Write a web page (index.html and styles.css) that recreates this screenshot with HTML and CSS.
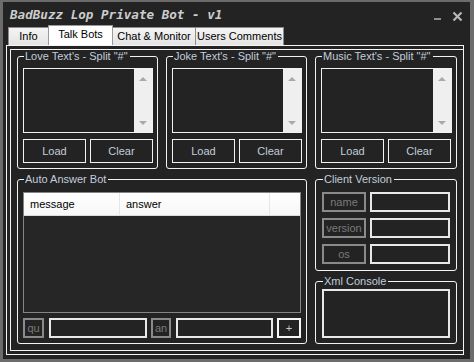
FILE: index.html
```html
<!DOCTYPE html>
<html>
<head>
<meta charset="utf-8">
<link rel="stylesheet" href="styles.css">
</head>
<body>
<div class="window">
  <div class="titlebar">
    <span class="title">BadBuzz Lop Private Bot - v1</span>
    <svg class="winctl" width="29" height="23" viewBox="0 0 29 23">
      <line x1="0" y1="17" x2="7" y2="17" stroke="#8e8e8e" stroke-width="2"/>
      <line x1="19.5" y1="10.5" x2="27.5" y2="18.5" stroke="#b9b9b9" stroke-width="2.2"/>
      <line x1="27.5" y1="10.5" x2="19.5" y2="18.5" stroke="#b9b9b9" stroke-width="2.2"/>
    </svg>
  </div>
  <div class="tabs">
    <div class="tab t-info">Info</div>
    <div class="tab active t-talk">Talk Bots</div>
    <div class="tab t-chat">Chat &amp; Monitor</div>
    <div class="tab t-users">Users Comments</div>
  </div>
  <div class="panel">
    <div class="page">
      <fieldset class="group top">
        <legend>Love Text's - Split "#"</legend>
        <div class="memo"><div class="scroll"><span class="arr up"></span><span class="arr down"></span></div></div>
        <div class="btns"><button class="btn">Load</button><button class="btn">Clear</button></div>
      </fieldset>
      <fieldset class="group top">
        <legend>Joke Text's - Split "#"</legend>
        <div class="memo"><div class="scroll"><span class="arr up"></span><span class="arr down"></span></div></div>
        <div class="btns"><button class="btn">Load</button><button class="btn">Clear</button></div>
      </fieldset>
      <fieldset class="group top">
        <legend>Music Text's - Split "#"</legend>
        <div class="memo"><div class="scroll"><span class="arr up"></span><span class="arr down"></span></div></div>
        <div class="btns"><button class="btn">Load</button><button class="btn">Clear</button></div>
      </fieldset>

      <fieldset class="group auto">
        <legend>Auto Answer Bot</legend>
        <div class="list">
          <div class="lhead">
            <div class="col c1">message</div>
            <div class="col c2">answer</div>
            <div class="col c3"></div>
          </div>
        </div>
        <div class="qrow">
          <div class="lbl l-qu">qu</div>
          <div class="inp i-q"></div>
          <div class="lbl l-an">an</div>
          <div class="inp i-a"></div>
          <button class="plus">+</button>
        </div>
      </fieldset>

      <div class="rightcol">
        <fieldset class="group client">
          <legend>Client Version</legend>
          <div class="crow"><div class="lbl cl">name</div><div class="inp ci"></div></div>
          <div class="crow"><div class="lbl cl">version</div><div class="inp ci"></div></div>
          <div class="crow"><div class="lbl cl">os</div><div class="inp ci"></div></div>
        </fieldset>
        <fieldset class="group xml">
          <legend>Xml Console</legend>
          <div class="console"></div>
        </fieldset>
      </div>
    </div>
  </div>
</div>
</body>
</html>
```

FILE: styles.css
```css
* { box-sizing: border-box; }
html, body { margin: 0; }
body {
  width: 474px;
  height: 362px;
  overflow: hidden;
  background: #6c6c6c;
  padding: 2px 4px 3px 3px;
  font-family: "Liberation Sans", Arial, sans-serif;
  font-size: 11px;
}
.window {
  height: 357px;
  background: #232323;
}
.titlebar {
  height: 23px;
  display: flex;
  align-items: center;
  justify-content: space-between;
  padding: 0 7px 0 7px;
}
.title {
  font-family: "DejaVu Sans Mono", monospace;
  font-weight: bold;
  font-style: italic;
  font-size: 12.6px;
  color: #cdcdcd;
  line-height: 15px;
  margin-top: 1px;
}
.winctl { display: block; }

.tabs {
  height: 20px;
  display: flex;
  align-items: flex-end;
  padding-left: 5px;
}
.tab {
  height: 18px;
  border: 1px solid #8d8d8d;
  border-bottom: none;
  background: linear-gradient(#f4f4f4, #e4e4e4);
  color: #000;
  font-size: 11px;
  line-height: 17px;
  text-align: center;
  white-space: nowrap;
}
.tab.active {
  height: 20px;
  background: #fff;
  line-height: 16px;
  border-color: #9a9a9a;
}
.t-info { width: 40px; border-right: none; }
.t-talk { width: 65px; }
.t-chat { width: 83px; border-left: none; }
.t-users { width: 88px; border-left: none; }

.panel {
  height: 310px;
  margin: 0 6px 0 3px;
  border: 1px solid #f4f4f4;
}
.page {
  height: 302px;
  margin: 3px 0 3px 3px;
  border: 1px solid #f4f4f4;
  border-right: none;
  padding: 0 0 0 6px;
  display: grid;
  grid-template-columns: 141px 141px 142px;
  grid-template-rows: 119px 171px;
  column-gap: 8px;
  row-gap: 4px;
}

.group {
  margin: 0;
  min-width: 0;
  border: 1px solid #f2f2f2;
  border-radius: 3px;
  padding: 5px 4px 5px 5px;
  height: 100%;
}
.group legend {
  padding: 0 2px 0 1px;
  margin-left: 1px;
  color: #c2cddb;
  font-size: 11px;
  line-height: 13px;
  white-space: nowrap;
}

.memo {
  height: 65px;
  border: 1px solid #f2f2f2;
  background: #232323;
  display: flex;
  justify-content: flex-end;
}
.scroll {
  width: 18px;
  height: 100%;
  background: #efefef;
  display: flex;
  flex-direction: column;
  justify-content: space-between;
  align-items: center;
  padding: 8px 0 7px;
}
.arr {
  width: 0;
  height: 0;
  border-left: 4px solid transparent;
  border-right: 4px solid transparent;
}
.arr.up { border-bottom: 4px solid #a9a9a9; }
.arr.down { border-top: 4px solid #a9a9a9; }

.btns {
  margin-top: 6px;
  display: flex;
  gap: 4px;
}
.btn {
  width: 63px;
  height: 24px;
  margin: 0;
  padding: 0;
  border: 1px solid #f2f2f2;
  background: #232323;
  color: #c2cddb;
  font-family: "Liberation Sans", Arial, sans-serif;
  font-size: 11px;
}

.auto {
  grid-column: 1 / 3;
  padding: 6px 5px 5px 5px;
}
.list {
  height: 121px;
  border: 1px solid #858585;
  background: #262626;
}
.lhead {
  height: 23px;
  display: flex;
  background: linear-gradient(#ffffff, #f7f7f7);
  border-bottom: 1px solid #dcdcdc;
}
.col {
  color: #000;
  font-size: 11px;
  line-height: 22px;
  padding-left: 6px;
  border-right: 1px solid #e6e6e6;
}
.c1 { width: 96px; }
.c2 { width: 150px; }
.c3 { flex: 1; border-right: none; }

.qrow {
  margin-top: 5px;
  height: 20px;
  display: flex;
}
.lbl {
  height: 20px;
  border: 2px solid #8a8a8a;
  color: #7a7a7a;
  font-size: 11px;
  line-height: 16px;
  text-align: center;
}
.inp {
  height: 20px;
  border: 2px solid #e8e8e8;
}
.l-qu { width: 21px; }
.i-q { width: 98px; margin-left: 5px; }
.l-an { width: 20px; margin-left: 4px; }
.i-a { width: 97px; margin-left: 5px; }
.plus {
  width: 24px;
  height: 20px;
  margin: 0 0 0 4px;
  padding: 0;
  border: 2px solid #f6f6f6;
  background: #232323;
  color: #c2cddb;
  font-family: "Liberation Sans", Arial, sans-serif;
  font-size: 11px;
  line-height: 14px;
}

.rightcol {
  display: flex;
  flex-direction: column;
  gap: 4px;
}
.client {
  height: 98px;
  padding: 6px 6px 6px 6px;
}
.crow {
  display: flex;
  gap: 4px;
  margin-bottom: 6px;
}
.crow:last-child { margin-bottom: 0; }
.cl { width: 44px; }
.ci { width: 80px; }
.xml {
  height: 69px;
  padding: 1px 6px 5px 6px;
}
.console {
  height: 49px;
  border: 2px solid #e8e8e8;
}
```
